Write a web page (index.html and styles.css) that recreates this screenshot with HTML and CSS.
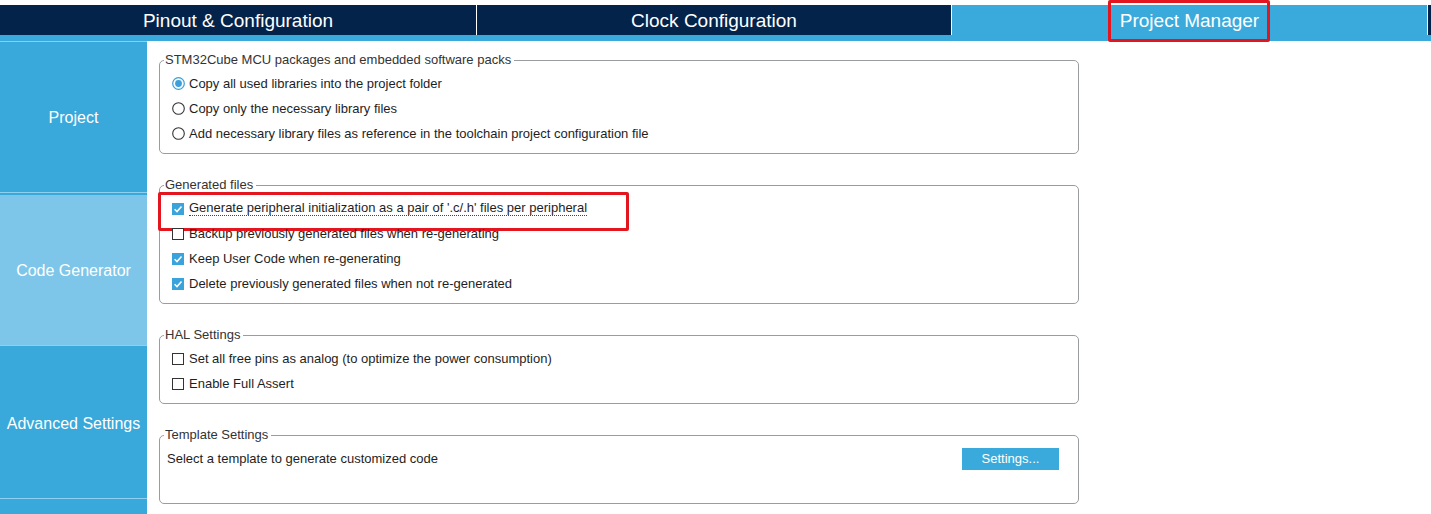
FILE: index.html
```html
<!DOCTYPE html>
<html>
<head>
<meta charset="utf-8">
<title>Project Manager</title>
<link rel="stylesheet" href="styles.css">
</head>
<body>
<header class="topbar">
  <nav class="tabs">
    <div class="tab">Pinout &amp; Configuration</div>
    <div class="tab">Clock Configuration</div>
    <div class="tab tab-active"><span class="tab-label">Project Manager</span></div>
    <div class="tab tab-end"></div>
  </nav>
  <div class="strip"></div>
</header>
<main class="layout">
  <aside class="sidebar">
    <div class="side-item">Project</div>
    <div class="side-item side-active">Code Generator</div>
    <div class="side-item">Advanced Settings</div>
  </aside>
  <section class="content">
    <fieldset class="group">
      <legend>STM32Cube MCU packages and embedded software packs</legend>
      <div class="row">
        <svg class="radio" width="13" height="13" viewBox="0 0 13 13"><circle cx="6.5" cy="6.5" r="5.8" fill="#fff" stroke="#3b9fd9" stroke-width="1.2"/><circle cx="6.5" cy="6.5" r="3.4" fill="#3b9fd9"/></svg>
        <span>Copy all used libraries into the project folder</span>
      </div>
      <div class="row">
        <svg class="radio" width="13" height="13" viewBox="0 0 13 13"><circle cx="6.5" cy="6.5" r="5.8" fill="#fff" stroke="#333" stroke-width="1.1"/></svg>
        <span>Copy only the necessary library files</span>
      </div>
      <div class="row">
        <svg class="radio" width="13" height="13" viewBox="0 0 13 13"><circle cx="6.5" cy="6.5" r="5.8" fill="#fff" stroke="#333" stroke-width="1.1"/></svg>
        <span>Add necessary library files as reference in the toolchain project configuration file</span>
      </div>
    </fieldset>

    <fieldset class="group">
      <legend>Generated files</legend>
      <div class="row row-marked">
        <svg class="check" width="12" height="12" viewBox="0 0 12 12"><rect width="12" height="12" fill="#3ba3db"/><path d="M2.6 6.2 L5 8.6 L9.5 3.6" fill="none" stroke="#fff" stroke-width="1.5"/></svg>
        <span class="focus">Generate peripheral initialization as a pair of '.c/.h' files per peripheral</span>
      </div>
      <div class="row">
        <svg class="check" width="12" height="12" viewBox="0 0 12 12"><rect x="0.5" y="0.5" width="11" height="11" fill="#fff" stroke="#333"/></svg>
        <span>Backup previously generated files when re-generating</span>
      </div>
      <div class="row">
        <svg class="check" width="12" height="12" viewBox="0 0 12 12"><rect width="12" height="12" fill="#3ba3db"/><path d="M2.6 6.2 L5 8.6 L9.5 3.6" fill="none" stroke="#fff" stroke-width="1.5"/></svg>
        <span>Keep User Code when re-generating</span>
      </div>
      <div class="row">
        <svg class="check" width="12" height="12" viewBox="0 0 12 12"><rect width="12" height="12" fill="#3ba3db"/><path d="M2.6 6.2 L5 8.6 L9.5 3.6" fill="none" stroke="#fff" stroke-width="1.5"/></svg>
        <span>Delete previously generated files when not re-generated</span>
      </div>
    </fieldset>

    <fieldset class="group">
      <legend>HAL Settings</legend>
      <div class="row">
        <svg class="check" width="12" height="12" viewBox="0 0 12 12"><rect x="0.5" y="0.5" width="11" height="11" fill="#fff" stroke="#333"/></svg>
        <span>Set all free pins as analog (to optimize the power consumption)</span>
      </div>
      <div class="row">
        <svg class="check" width="12" height="12" viewBox="0 0 12 12"><rect x="0.5" y="0.5" width="11" height="11" fill="#fff" stroke="#333"/></svg>
        <span>Enable Full Assert</span>
      </div>
    </fieldset>

    <fieldset class="group">
      <legend>Template Settings</legend>
      <div class="row row-plain">
        <span>Select a template to generate customized code</span>
        <button class="btn" type="button">Settings...</button>
      </div>
      <div class="row-spacer"></div>
    </fieldset>
  </section>
</main>
</body>
</html>
```

FILE: styles.css
```css
* { box-sizing: border-box; }
html, body { margin: 0; padding: 0; background: #fff; }
body {
  font-family: "Liberation Sans", Arial, sans-serif;
  width: 1431px;
  height: 514px;
  overflow: hidden;
}

.topbar { padding-top: 5px; }
.tabs {
  display: grid;
  grid-template-columns: 476px 474px 475px 1fr;
  column-gap: 1px;
  height: 30px;
}
.tab {
  background: #03234b;
  color: #fff;
  font-size: 19px;
  display: flex;
  align-items: center;
  justify-content: center;
  padding-top: 1px;
}
.tab-active { background: #3aaadc; }
.tab-label { position: relative; line-height: 21px; }
.tab-label::after {
  content: "";
  position: absolute;
  top: -10px;
  bottom: -11px;
  left: -12px;
  right: -11px;
  border: 3px solid #e3161f;
  border-radius: 2px;
}
.strip { height: 6px; background: #3aaadc; }

.layout { display: flex; height: 473px; }
.sidebar {
  width: 147px;
  flex: none;
  background: #39a8db;
  border-top: 1px solid #8ed0ef;
}
.side-item {
  height: 151px;
  border-bottom: 1px solid #8ed0ef;
  margin-bottom: 2px;
  display: flex;
  align-items: center;
  justify-content: center;
  padding-top: 2px;
  color: #fff;
  font-size: 16px;
}
.side-active { background: #7dc6e9; }

.content { flex: 1; padding: 12px 0 0 12px; }
.group {
  width: 920px;
  margin: 0 0 24px;
  padding: 4px 4px 7px 4px;
  border: 1px solid #9a9da0;
  border-radius: 5px;
  min-inline-size: auto;
}
.group legend {
  padding: 0 3px 0 1px;
  font-size: 13px;
  line-height: 14px;
  color: #333;
}
.row {
  display: flex;
  align-items: center;
  height: 25px;
  margin-left: 8px;
  gap: 5px;
  font-size: 13px;
  color: #1e1e1e;
  position: relative;
}
.row svg { flex: none; display: block; }
.radio { margin-right: -1px; }
.focus { border-bottom: 1px dotted #444; line-height: 14px; }
.row-marked::after {
  content: "";
  position: absolute;
  top: -4px;
  left: -14px;
  width: 465px;
  height: 33px;
  border: 3px solid #e3161f;
  border-radius: 2px;
}
.row-plain { margin-left: 3px; }
.btn {
  margin-left: auto;
  margin-right: 15px;
  width: 97px;
  height: 22px;
  padding: 0;
  border: none;
  background: #3aaadc;
  color: #fff;
  font-family: "Liberation Sans", Arial, sans-serif;
  font-size: 13px;
}
.row-spacer { height: 25px; }
```
